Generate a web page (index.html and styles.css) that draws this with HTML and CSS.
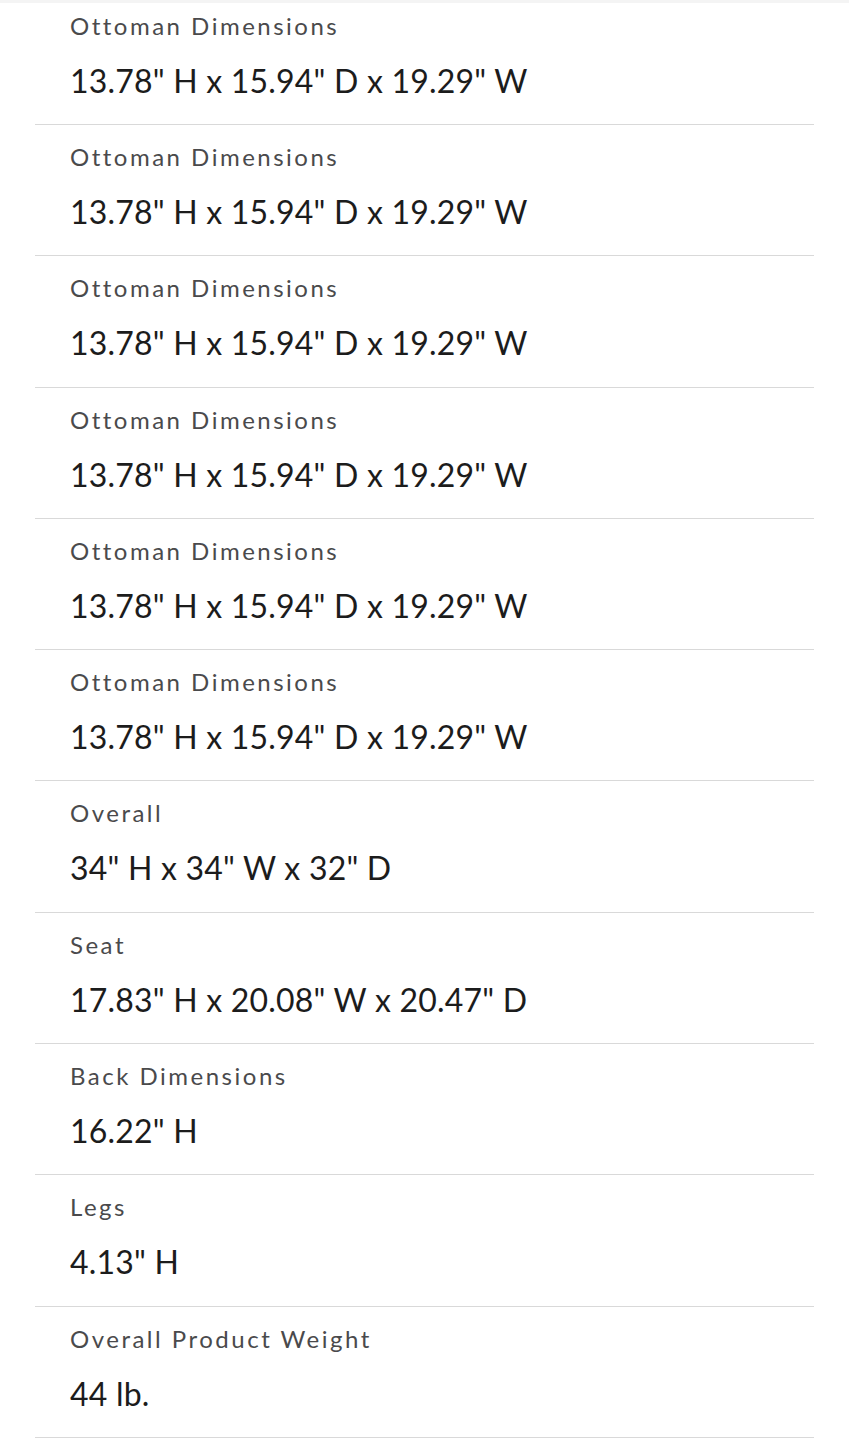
FILE: index.html
```html
<!DOCTYPE html>
<html lang="en">
<head>
    <meta charset="UTF-8">
    <meta name="viewport" content="width=device-width, initial-scale=1.0">
    <title>Dimensions</title>
    <link rel="stylesheet" href="styles.css">
</head>
<body>
    <div class="topbar"></div>
    <div class="specs">
        <div class="spec">
            <div class="spec-label">Ottoman Dimensions</div>
            <div class="spec-value">13.78" H x 15.94" D x 19.29" W</div>
        </div>
        <div class="spec">
            <div class="spec-label">Ottoman Dimensions</div>
            <div class="spec-value">13.78" H x 15.94" D x 19.29" W</div>
        </div>
        <div class="spec">
            <div class="spec-label">Ottoman Dimensions</div>
            <div class="spec-value">13.78" H x 15.94" D x 19.29" W</div>
        </div>
        <div class="spec">
            <div class="spec-label">Ottoman Dimensions</div>
            <div class="spec-value">13.78" H x 15.94" D x 19.29" W</div>
        </div>
        <div class="spec">
            <div class="spec-label">Ottoman Dimensions</div>
            <div class="spec-value">13.78" H x 15.94" D x 19.29" W</div>
        </div>
        <div class="spec">
            <div class="spec-label">Ottoman Dimensions</div>
            <div class="spec-value">13.78" H x 15.94" D x 19.29" W</div>
        </div>
        <div class="spec">
            <div class="spec-label">Overall</div>
            <div class="spec-value">34" H x 34" W x 32" D</div>
        </div>
        <div class="spec">
            <div class="spec-label">Seat</div>
            <div class="spec-value">17.83" H x 20.08" W x 20.47" D</div>
        </div>
        <div class="spec">
            <div class="spec-label">Back Dimensions</div>
            <div class="spec-value">16.22" H</div>
        </div>
        <div class="spec">
            <div class="spec-label">Legs</div>
            <div class="spec-value">4.13" H</div>
        </div>
        <div class="spec">
            <div class="spec-label">Overall Product Weight</div>
            <div class="spec-value">44 lb.</div>
        </div>
    </div>
</body>
</html>
```

FILE: styles.css
```css
body {
    margin: 0;
    font-family: Lato, "Open Sans", sans-serif;
    background-color: #fff;
}
.topbar {
    height: 3px;
    background-color: #f4f4f4;
}
.specs {
    margin: 0 35px;
}
.spec {
    padding: 17px 35px 24.3px;
    border-bottom: 1px solid #d9d9d9;
}
.spec:first-child {
    padding-top: 7.7px;
}
.spec-label {
    font-size: 24px;
    line-height: 29px;
    letter-spacing: 2.5px;
    color: #4a4a4c;
}
.spec-value {
    margin-top: 22px;
    font-size: 32px;
    line-height: 38px;
    letter-spacing: 0.2px;
    color: #1c1c1c;
}
```
